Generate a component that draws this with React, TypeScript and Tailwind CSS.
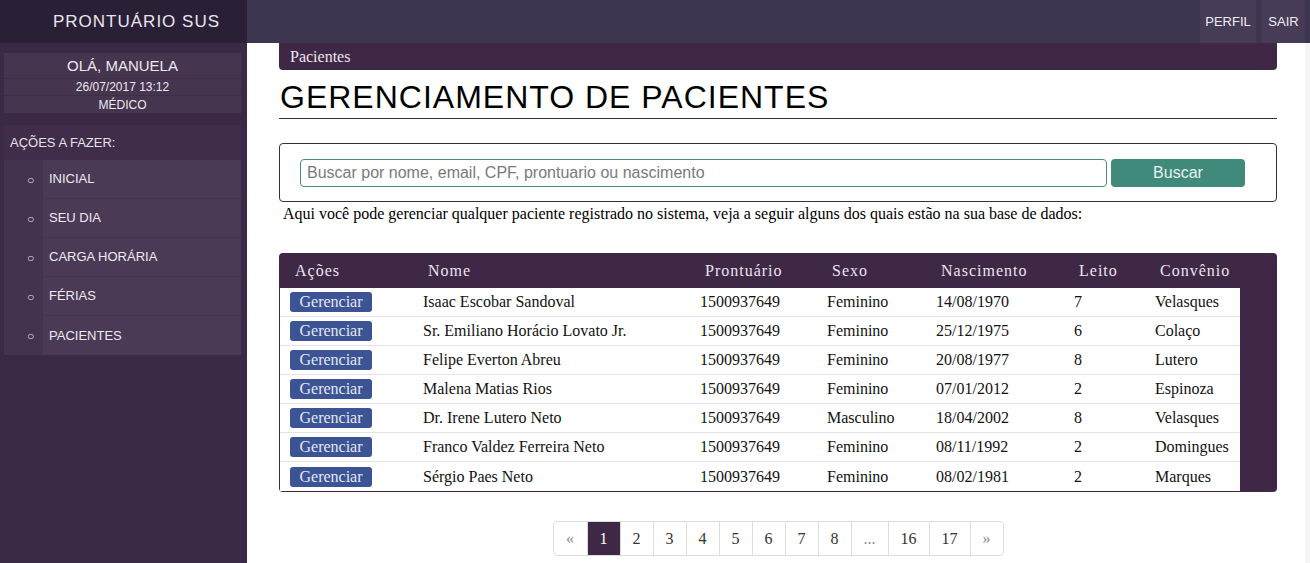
import React from "react";

const rows = [
  ["Isaac Escobar Sandoval", "Feminino", "14/08/1970", "7", "Velasques"],
  ["Sr. Emiliano Horácio Lovato Jr.", "Feminino", "25/12/1975", "6", "Colaço"],
  ["Felipe Everton Abreu", "Feminino", "20/08/1977", "8", "Lutero"],
  ["Malena Matias Rios", "Feminino", "07/01/2012", "2", "Espinoza"],
  ["Dr. Irene Lutero Neto", "Masculino", "18/04/2002", "8", "Velasques"],
  ["Franco Valdez Ferreira Neto", "Feminino", "08/11/1992", "2", "Domingues"],
  ["Sérgio Paes Neto", "Feminino", "08/02/1981", "2", "Marques"],
];

const menu = ["INICIAL", "SEU DIA", "CARGA HORÁRIA", "FÉRIAS", "PACIENTES"];
const pages = ["«", "1", "2", "3", "4", "5", "6", "7", "8", "...", "16", "17", "»"];

const sans = "font-['Liberation_Sans',Arial,sans-serif]";
const serif = "font-['Liberation_Serif','Times_New_Roman',serif]";

export default function App() {
  return (
    <div className={`flex h-[563px] w-[1310px] overflow-hidden bg-white ${sans}`}>
      {/* Sidebar */}
      <aside className="flex w-[247px] shrink-0 flex-col bg-[#3b2a45]">
        <div className="flex h-[43px] items-center justify-center bg-[#2a2036] pl-[26px] text-[17px] tracking-[1px] text-[#e9e5ef]">
          PRONTUÁRIO SUS
        </div>
        <div className="ml-1 mr-[6px] mt-[10px] flex flex-col bg-[#46354f] text-center text-[#ece8f0]">
          <div className="flex h-[26px] items-center justify-center border-b border-[#3f2e48] pt-px text-[15px]">OLÁ, MANUELA</div>
          <div className="flex h-[17px] items-center justify-center border-b border-[#3f2e48] text-[12px]">26/07/2017 13:12</div>
          <div className="flex h-[17px] items-center justify-center text-[12px]">MÉDICO</div>
        </div>
        <div className="ml-1 mr-[6px] mt-[12px] flex h-[35px] items-center bg-[#3f2d49] pl-[6px] text-[13px] text-[#e6e1ea]">
          AÇÕES A FAZER:
        </div>
        <div className="ml-1 mr-[6px] flex flex-col bg-[#44334f]">
          {menu.map((m, i) => (
            <div key={m} className="flex h-[39px]">
              <div className="flex w-[39px] items-center pl-[23px] text-[12px] text-[#e6e1ea]">○</div>
              <div className={`flex flex-1 items-center bg-[#4b3a55] pl-[6px] text-[13px] text-[#eeeaf2] ${i < menu.length - 1 ? "border-b border-[#46354f]" : ""}`}>
                {m}
              </div>
            </div>
          ))}
        </div>
      </aside>

      {/* Main */}
      <div className="flex min-w-0 flex-1 flex-col">
        <header className="flex h-[43px] shrink-0 items-stretch justify-end bg-[#3e3550]">
          <div className="flex w-[56px] items-center justify-center bg-[#463c58] text-[13px] text-[#f0edf4]">PERFIL</div>
          <div className="w-[6px]" />
          <div className="flex w-[43px] items-center justify-center bg-[#463c58] text-[13px] text-[#f0edf4]">SAIR</div>
          <div className="w-[5px]" />
        </header>
        <div className="flex flex-1">
          <main className="flex flex-1 flex-col pl-8 pr-[28px]">
            <div className={`flex h-[27px] items-center rounded-b-[4px] bg-[#3f2846] pl-[11px] text-[16px] text-[#ece6ef] ${serif}`}>
              Pacientes
            </div>
            <h1 className="mt-[9px] border-b border-[#333] pb-[3px] pl-px text-[32px] leading-[36px] tracking-[1px] text-black">
              GERENCIAMENTO DE PACIENTES
            </h1>
            <div className="mt-[24px] flex h-[59px] items-center gap-[4px] rounded-[4px] border border-[#333] pl-5 pr-[31px]">
              <input
                className="h-[28px] flex-1 rounded-[4px] border border-[#4e8a7c] px-[6px] text-[16px] text-[#555] outline-none placeholder:text-[#7a7a7a]"
                placeholder="Buscar por nome, email, CPF, prontuario ou nascimento"
              />
              <button className="h-[28px] w-[134px] rounded-[4px] bg-[#3f8a7a] pt-px text-[16px] text-[#e8f2ef]">Buscar</button>
            </div>
            <p className={`mt-[2px] pl-[4px] text-[16px] leading-[20px] text-black ${serif}`}>
              Aqui você pode gerenciar qualquer paciente registrado no sistema, veja a seguir alguns dos quais estão na sua base de dados:
            </p>

            <div className={`mt-[29px] rounded-[4px] bg-[#3e2846] pb-px pl-px ${serif}`}>
              <div className="grid h-[35px] grid-cols-[133px_277px_127px_109px_138px_81px_95px] items-center text-[16px] tracking-[1px] text-[#ebe4ee]">
                {["Ações", "Nome", "Prontuário", "Sexo", "Nascimento", "Leito", "Convênio"].map((h) => (
                  <div key={h} className="pl-[15px]">{h}</div>
                ))}
              </div>
              <div className="w-[960px] bg-white">
                {rows.map((r, i) => (
                  <div
                    key={i}
                    className={`grid h-[29px] grid-cols-[133px_277px_127px_109px_138px_81px_95px] items-center text-[16px] text-[#111] ${i < rows.length - 1 ? "border-b border-[#e4e4e4]" : ""}`}
                  >
                    <div className="pl-[10px]">
                      <span className="flex h-[20px] w-[82px] items-center justify-center rounded-[3px] bg-[#3c5494] text-[#e3e7f3]">Gerenciar</span>
                    </div>
                    <div className="pl-[10px]">{r[0]}</div>
                    <div className="pl-[10px]">1500937649</div>
                    <div className="pl-[10px]">{r[1]}</div>
                    <div className="pl-[10px]">{r[2]}</div>
                    <div className="pl-[10px]">{r[3]}</div>
                    <div className="whitespace-nowrap pl-[10px]">{r[4]}</div>
                  </div>
                ))}
              </div>
            </div>

            <div className="mt-[29px] flex justify-center">
              <div className={`flex h-[35px] overflow-hidden rounded-[4px] border border-[#ddd] text-[16px] ${serif}`}>
                {pages.map((p, i) => (
                  <div
                    key={i}
                    className={`flex h-full items-center justify-center ${i > 0 ? "border-l border-[#ddd]" : ""} ${
                      p === "1" ? "bg-[#3e2846] text-white" : p === "«" || p === "»" || p === "..." ? "text-[#888]" : "text-[#333]"
                    } ${p === "16" || p === "17" ? "w-[41px]" : p === "..." ? "w-[37px]" : "w-[33px]"}`}
                  >
                    {p}
                  </div>
                ))}
              </div>
            </div>
          </main>
          <div className="w-[5px] bg-[#f5f5f6]" />
        </div>
      </div>
    </div>
  );
}
